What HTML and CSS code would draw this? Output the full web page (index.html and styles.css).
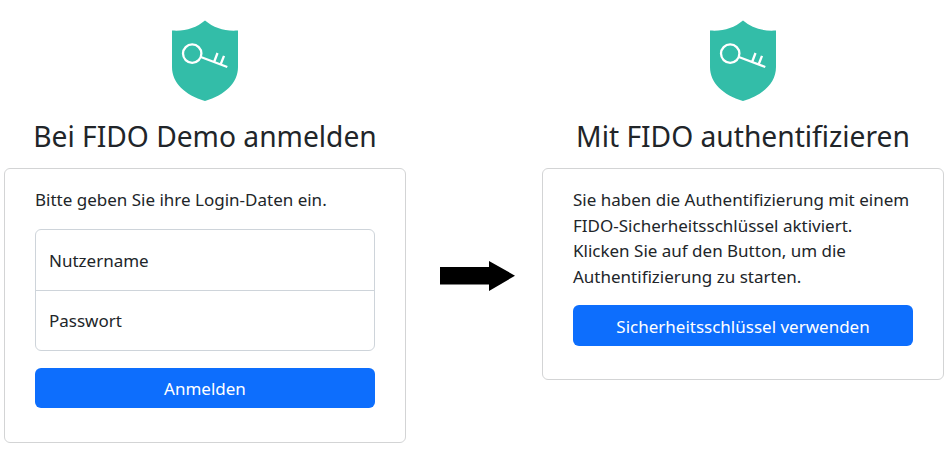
FILE: index.html
```html
<!DOCTYPE html>
<html lang="de">
<head>
<meta charset="utf-8">
<title>FIDO Demo</title>
<link rel="stylesheet" href="styles.css">
</head>
<body>
<svg class="defs" aria-hidden="true">
  <symbol id="shield" viewBox="0 0 66 82">
    <path fill="#33bda8" d="M33 .5C24 8 13 11.500 0 10.500V47C0 63 13 75 33 81C53 75 66 63 66 47V10.500C53 11.500 42 8 33 .5Z"/>
    <g fill="none" stroke="#fff" stroke-width="2.300">
      <circle cx="20.200" cy="33.600" r="9.200"/>
      <path d="M28.800 37L55.300 47M42.300 41.500L45.500 33M48.800 44L52 35.800"/>
    </g>
  </symbol>
</svg>
<main class="flow">
  <section class="panel">
    <svg class="logo"><use href="#shield"/></svg>
    <h1>Bei FIDO Demo anmelden</h1>
    <form class="card login">
      <p>Bitte geben Sie ihre Login-Daten ein.</p>
      <div class="fields">
        <div class="field">Nutzername</div>
        <div class="field">Passwort</div>
      </div>
      <button class="btn" type="button">Anmelden</button>
    </form>
  </section>
  <svg class="arrow" viewBox="0 0 76 32"><path d="M0 7H49V1L75 15.700L49 31V24.500H0Z"/></svg>
  <section class="panel">
    <svg class="logo"><use href="#shield"/></svg>
    <h1>Mit FIDO authentifizieren</h1>
    <div class="card key">
      <p>Sie haben die Authentifizierung mit einem<br>FIDO-Sicherheitsschlüssel aktiviert.<br>Klicken Sie auf den Button, um die<br>Authentifizierung zu starten.</p>
      <button class="btn" type="button">Sicherheitsschlüssel verwenden</button>
    </div>
  </section>
</main>
</body>
</html>
```
FILE: styles.css
```css
* { box-sizing: border-box; }
body {
  margin: 0;
  background: #fff;
  color: #212529;
  font: 17px/25.5px "Noto Sans", sans-serif;
}
.defs { position: absolute; width: 0; height: 0; }
.flow { display: flex; align-items: flex-start; padding: 20px 4px 0; }
.panel { width: 402px; display: flex; flex-direction: column; align-items: center; }
.logo { display: block; width: 66px; height: 82px; }
h1 {
  margin: 14px 0 15px;
  font-size: 28.2px;
  line-height: 37px;
  font-weight: 400;
  white-space: nowrap;
  transform: scaleY(1.06);
  transform-origin: 50% 0;
}
.card { width: 100%; border: 1px solid #d3d4d5; border-radius: 6px; padding: 18px 30px 0; }
.login { height: 275px; }
.key { height: 212px; }
p { margin: 0; white-space: nowrap; }
.fields { margin: 16px 0 17px; border: 1px solid #ced4da; border-radius: 6px; }
.field { height: 60px; padding: 18px 13px 0; }
.field + .field { border-top: 1px solid #ced4da; padding-top: 17px; }
.btn {
  display: block;
  width: 340px;
  height: 40.5px;
  padding: 2px 0 0;
  border: 0;
  border-radius: 6px;
  background: #0d6efd;
  color: #fff;
  font: inherit;
}
.key .btn { margin-top: 16px; height: 40.5px; }
.arrow { flex: none; width: 76px; height: 32px; margin: 240px 26px 0 34px; }
```
